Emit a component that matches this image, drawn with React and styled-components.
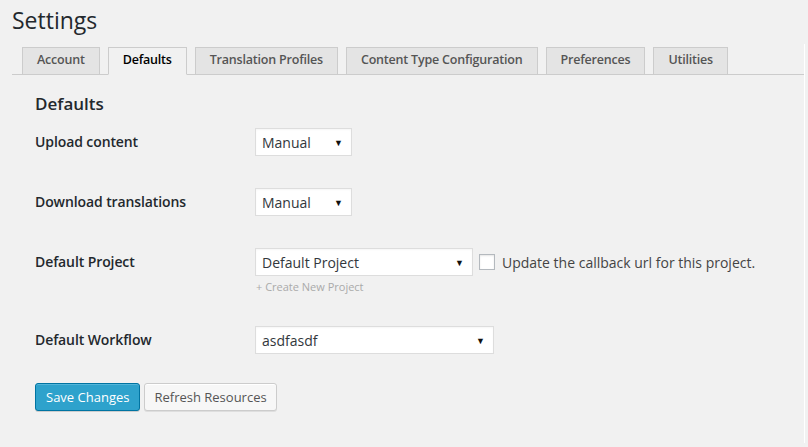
import React from "react";
import styled, { createGlobalStyle } from "styled-components";

const Global = createGlobalStyle`
  body {
    margin: 0;
    background: #f1f1f1;
    font-family: "Open Sans", sans-serif;
    color: #23282d;
  }
`;

const Wrap = styled.div`
  padding: 0 3px 0 12px;
`;

const Title = styled.h1`
  margin: 0;
  padding-top: 6px;
  font-size: 23px;
  line-height: 29px;
  font-weight: 400;
  color: #23282d;
`;

const Section = styled.div`
  margin-top: 9px;
  padding-top: 3px;
  border-right: 1px solid #fff;
`;

const TabBar = styled.div`
  display: flex;
  gap: 8px;
  padding-left: 10px;
  border-bottom: 1px solid #ccc;
`;

const Tab = styled.div`
  box-sizing: border-box;
  height: 28px;
  margin-bottom: -1px;
  padding: 3px 14px 0;
  font-size: 12.5px;
  letter-spacing: -0.2px;
  line-height: 18px;
  font-weight: 600;
  border: 1px solid #ccc;
  border-bottom-color: ${(p) => (p.$active ? "#f1f1f1" : "#ccc")};
  background: ${(p) => (p.$active ? "#f1f1f1" : "#e4e4e4")};
  color: ${(p) => (p.$active ? "#000" : "#555")};
  white-space: nowrap;
`;

const Body = styled.div`
  padding: 0 0 32px 23px;
`;

const Heading = styled.h3`
  margin: 18px 0 13px;
  font-size: 17px;
  line-height: 22px;
  font-weight: 600;
  color: #23282d;
`;

const Row = styled.div`
  display: flex;
  align-items: flex-start;
  margin-top: ${(p) => p.$top || 0}px;
`;

const Label = styled.div`
  width: 220px;
  flex: none;
  font-size: 14px;
  letter-spacing: -0.1px;
  line-height: 28px;
  font-weight: 600;
  color: #23282d;
`;

const Field = styled.div`
  display: flex;
  flex-direction: column;
`;

const Inline = styled.div`
  display: flex;
  align-items: center;
`;

const Select = styled.div`
  box-sizing: border-box;
  width: ${(p) => p.$w}px;
  height: 28px;
  display: flex;
  align-items: center;
  justify-content: space-between;
  padding: 0 8px 0 6px;
  background: #fff;
  border: 1px solid #ddd;
  box-shadow: inset 0 1px 2px rgba(0, 0, 0, 0.04);
  font-size: 14px;
  color: #32373c;
`;

const Arrow = styled.span`
  font-size: 9px;
  color: #111;
  line-height: 1;
`;

const Check = styled.span`
  box-sizing: border-box;
  width: 16px;
  height: 16px;
  margin: 0 7px 0 6px;
  background: #fff;
  border: 1px solid #b4b9be;
  box-shadow: inset 0 1px 2px rgba(0, 0, 0, 0.1);
`;

const CheckText = styled.span`
  font-size: 14px;
  color: #444;
`;

const Note = styled.div`
  margin-top: 3px;
  padding-left: 1px;
  font-size: 11px;
  line-height: 16px;
  color: #aaa;
`;

const Buttons = styled.div`
  display: flex;
  gap: 4px;
  margin-top: 29px;
`;

const Button = styled.button`
  box-sizing: border-box;
  height: 28px;
  padding: 0 ${(p) => (p.$primary ? 10 : 9)}px 1px;
  font-family: "Open Sans", sans-serif;
  font-size: 13px;
  border-radius: 3px;
  border: 1px solid ${(p) => (p.$primary ? "#0074a2" : "#ccc")};
  background: ${(p) => (p.$primary ? "#2ea2cc" : "#f7f7f7")};
  color: ${(p) => (p.$primary ? "#fff" : "#555")};
  box-shadow: ${(p) =>
    p.$primary
      ? "inset 0 1px 0 rgba(120,200,230,.5), 0 1px 0 rgba(0,0,0,.15)"
      : "inset 0 1px 0 #fff, 0 1px 0 rgba(0,0,0,.08)"};
`;

const tabs = [
  "Account",
  "Defaults",
  "Translation Profiles",
  "Content Type Configuration",
  "Preferences",
  "Utilities",
];

function Dropdown({ w, value }) {
  return (
    <Select $w={w}>
      <span>{value}</span>
      <Arrow>▼</Arrow>
    </Select>
  );
}

export default function App() {
  return (
    <Wrap>
      <Global />
      <Title>Settings</Title>
      <Section>
        <TabBar>
          {tabs.map((t) => (
            <Tab key={t} $active={t === "Defaults"}>
              {t}
            </Tab>
          ))}
        </TabBar>
        <Body>
          <Heading>Defaults</Heading>
          <Row>
            <Label>Upload content</Label>
            <Dropdown w={97} value="Manual" />
          </Row>
          <Row $top={32}>
            <Label>Download translations</Label>
            <Dropdown w={97} value="Manual" />
          </Row>
          <Row $top={32}>
            <Label>Default Project</Label>
            <Field>
              <Inline>
                <Dropdown w={218} value="Default Project" />
                <Check />
                <CheckText>Update the callback url for this project.</CheckText>
              </Inline>
              <Note>+ Create New Project</Note>
            </Field>
          </Row>
          <Row $top={31}>
            <Label>Default Workflow</Label>
            <Dropdown w={239} value="asdfasdf" />
          </Row>
          <Buttons>
            <Button $primary>Save Changes</Button>
            <Button>Refresh Resources</Button>
          </Buttons>
        </Body>
      </Section>
    </Wrap>
  );
}
